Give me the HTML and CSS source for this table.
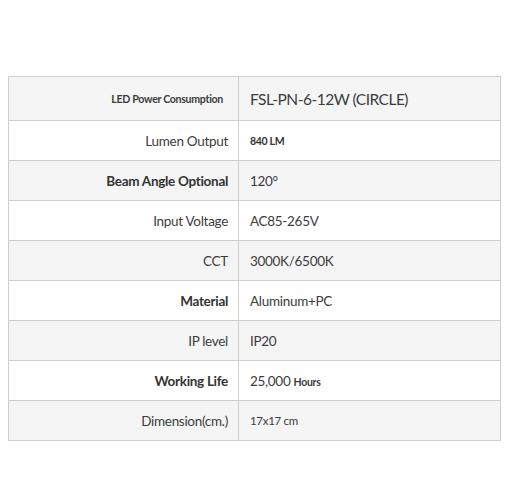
FILE: index.html
```html
<!DOCTYPE html>
<html>
<head>
<meta charset="utf-8">
<link rel="stylesheet" href="styles.css">
</head>
<body>
<div class="wrap">
<table class="spec">
  <tr class="r-head shade">
    <td class="label small">LED Power Consumption</td>
    <td class="value big">FSL-PN-6-12W (CIRCLE)</td>
  </tr>
  <tr>
    <td class="label">Lumen Output</td>
    <td class="value small b">840 LM</td>
  </tr>
  <tr class="shade">
    <td class="label b">Beam Angle Optional</td>
    <td class="value">120°</td>
  </tr>
  <tr>
    <td class="label">Input Voltage</td>
    <td class="value">AC85-265V</td>
  </tr>
  <tr class="shade">
    <td class="label">CCT</td>
    <td class="value">3000K/6500K</td>
  </tr>
  <tr>
    <td class="label b">Material</td>
    <td class="value">Aluminum+PC</td>
  </tr>
  <tr class="shade">
    <td class="label">IP level</td>
    <td class="value">IP20</td>
  </tr>
  <tr>
    <td class="label b">Working Life</td>
    <td class="value">25,000 <span class="unit">Hours</span></td>
  </tr>
  <tr class="shade">
    <td class="label">Dimension(cm.)</td>
    <td class="value small2">17x17 cm</td>
  </tr>
</table>
</div>
</body>
</html>
```
FILE: styles.css
```css
html, body {
  margin: 0;
  padding: 0;
  background: #ffffff;
}
.wrap {
  padding: 76px 0 0 8px;
}
.spec {
  border-collapse: collapse;
  width: 493px;
  border: 1px solid #a8a8a8;
  font-family: Lato, "Open Sans", sans-serif;
  color: #3c3c3c;
  letter-spacing: -0.3px;
}
.spec td {
  border: 1px solid #cfcfcf;
  height: 39px;
  padding: 0;
  vertical-align: middle;
}
.spec tr.r-head td {
  height: 43px;
}
.spec tr.shade td {
  background: #f5f5f5;
}
.label {
  width: 230px;
  text-align: right;
  padding-right: 10px !important;
  font-size: 13.5px;
  box-sizing: border-box;
}
.value {
  padding-left: 11px !important;
  font-size: 13.5px;
}
.label.small {
  font-size: 10.6px;
  font-weight: 700;
  padding-right: 15px !important;
}
.value.small {
  font-size: 10.5px;
}
.value.small2 {
  font-size: 11.5px;
}
.big {
  font-size: 15.5px;
  letter-spacing: -0.5px;
}
.b {
  font-weight: 700;
  color: #333333;
}
.unit {
  font-size: 10.5px;
  font-weight: 700;
}
```
